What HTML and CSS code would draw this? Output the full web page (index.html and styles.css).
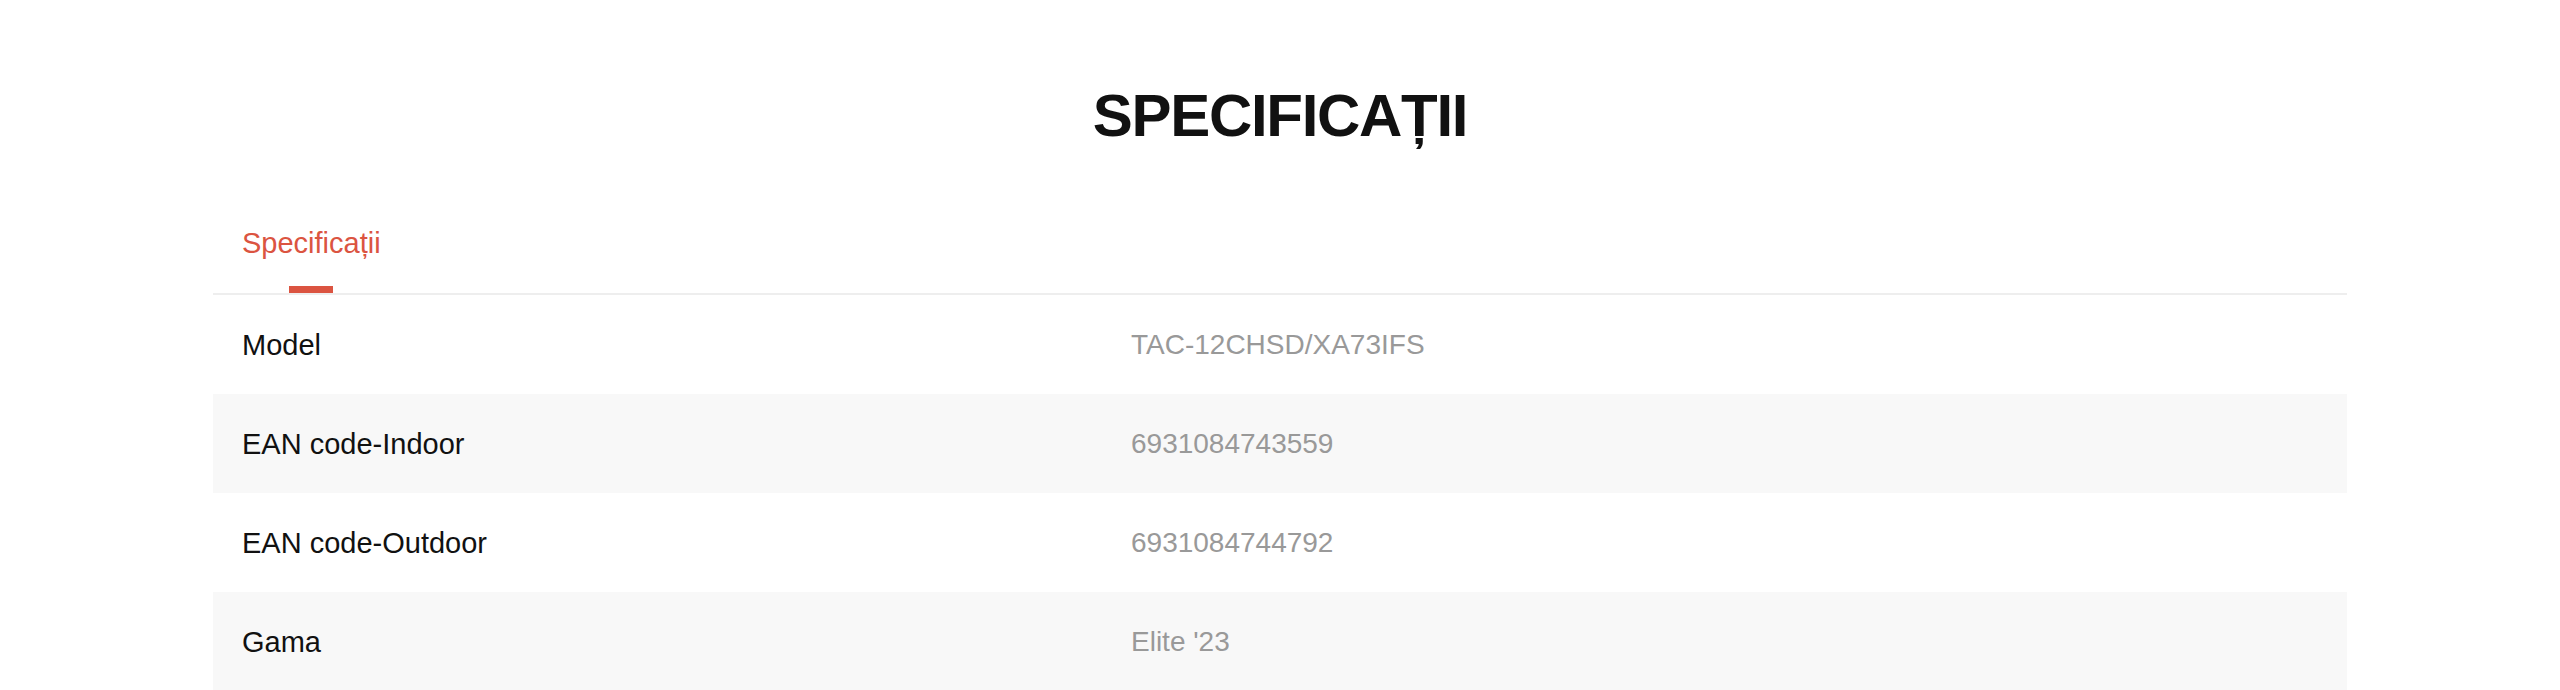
FILE: index.html
```html
<!DOCTYPE html>
<html lang="ro">
<head>
<meta charset="utf-8">
<title>Specificații</title>
<link rel="stylesheet" href="styles.css">
</head>
<body>
<section class="specs">
  <h2 class="specs-title">SPECIFICAȚII</h2>
  <div class="tabs">
    <div class="tab tab-active">Specificații</div>
  </div>
  <div class="spec-table">
    <div class="spec-row">
      <div class="spec-label">Model</div>
      <div class="spec-value">TAC-12CHSD/XA73IFS</div>
    </div>
    <div class="spec-row spec-row-alt">
      <div class="spec-label">EAN code-Indoor</div>
      <div class="spec-value">6931084743559</div>
    </div>
    <div class="spec-row">
      <div class="spec-label">EAN code-Outdoor</div>
      <div class="spec-value">6931084744792</div>
    </div>
    <div class="spec-row spec-row-alt">
      <div class="spec-label">Gama</div>
      <div class="spec-value">Elite '23</div>
    </div>
  </div>
</section>
</body>
</html>
```
FILE: styles.css
```css
html, body {
  margin: 0;
  padding: 0;
  background: #ffffff;
}

body {
  font-family: "Liberation Sans", Arial, Helvetica, sans-serif;
  color: #111111;
}

.specs {
  width: 2134px;
  margin: 0 auto;
  padding-top: 80px;
}

.specs-title {
  margin: 0;
  text-align: center;
  font-size: 60px;
  line-height: 72px;
  font-weight: 700;
  letter-spacing: -1.3px;
  color: #111111;
}

.tabs {
  display: flex;
  margin-top: 71px;
  border-bottom: 2px solid #eeeeee;
}

.tab {
  display: flex;
  flex-direction: column;
  align-items: center;
  height: 70px;
  padding: 0 29px;
  font-size: 29px;
  line-height: 40px;
}

.tab::after {
  content: "";
  display: block;
  width: 44px;
  height: 7px;
  margin-top: auto;
  background: #db5441;
}

.tab-active {
  color: #db5441;
}

.spec-row {
  display: flex;
  align-items: center;
  height: 99px;
  padding: 0 29px;
  font-size: 29px;
  line-height: 40px;
}

.spec-row-alt {
  background: #f8f8f8;
}

.spec-label {
  width: 889px;
  flex: none;
  color: #111111;
}

.spec-value {
  font-size: 28px;
  color: #999999;
}
```
